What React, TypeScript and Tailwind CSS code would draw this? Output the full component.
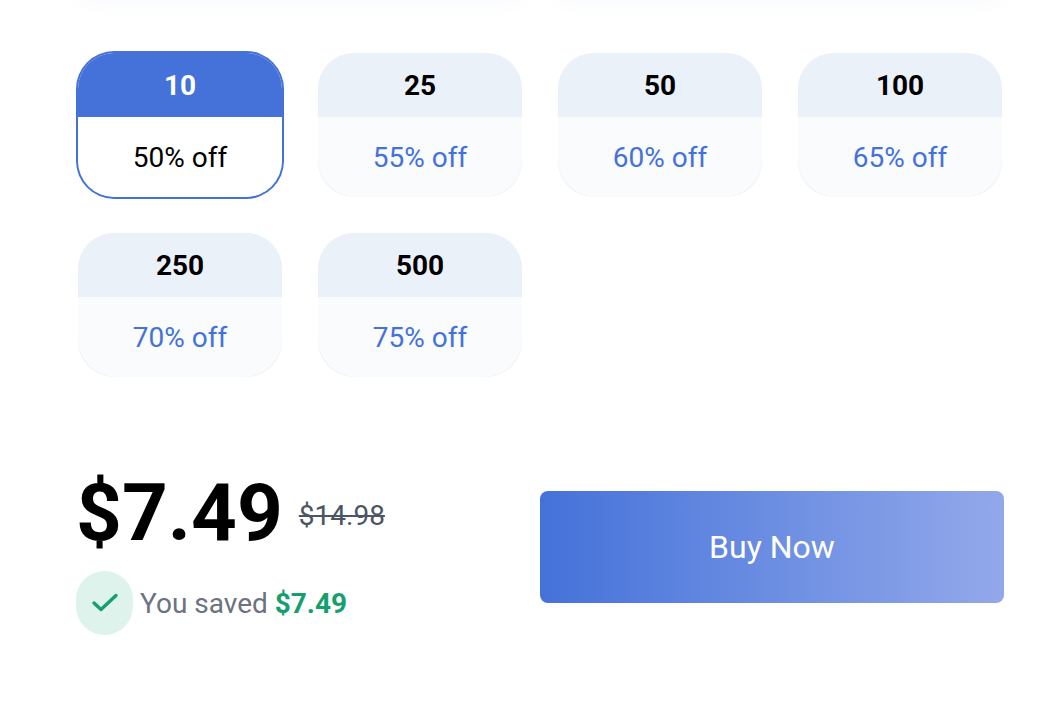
import React, { useState } from 'react';

interface Tier {
  quantity: number;
  discount: number;
}

interface TierCardProps {
  tier: Tier;
  selected: boolean;
  onSelect: (quantity: number) => void;
}

const tiers: Tier[] = [
  { quantity: 10, discount: 50 },
  { quantity: 25, discount: 55 },
  { quantity: 50, discount: 60 },
  { quantity: 100, discount: 65 },
  { quantity: 250, discount: 70 },
  { quantity: 500, discount: 75 },
];

const TierCard: React.FC<TierCardProps> = ({ tier, selected, onSelect }) => {
  return (
    <button
      type="button"
      aria-pressed={selected}
      onClick={() => onSelect(tier.quantity)}
      className={`flex flex-col overflow-hidden rounded-[36px] text-center text-[28px] leading-[33px] ${
        selected ? 'bg-white ring-2 ring-[#4472d9]' : 'bg-[#ebf1f8]'
      }`}
    >
      <span
        className={`w-full pt-4 pb-[15px] font-bold ${
          selected ? 'bg-[#4472d9] text-white' : 'bg-[#ebf1f8] text-black'
        }`}
      >
        {tier.quantity}
      </span>
      <span
        className={`w-full rounded-b-[38px] pt-6 pb-[23px] ${
          selected ? 'bg-white text-black' : 'bg-[#f9fbfd] text-[#4472d9]'
        }`}
      >
        {tier.discount}% off
      </span>
    </button>
  );
};

const App: React.FC = () => {
  const [selected, setSelected] = useState(10);

  return (
    <div className="min-h-screen overflow-hidden bg-white pr-[52px] pl-[76px] font-[Roboto,sans-serif]">
      {/* lower edge of the cards above */}
      <div className="-mt-12 grid grid-cols-2 gap-6">
        <div className="h-10 rounded-3xl shadow-[0_4px_24px_rgba(68,114,217,0.07)]" />
        <div className="h-10 rounded-3xl shadow-[0_4px_24px_rgba(68,114,217,0.07)]" />
      </div>

      <div className="mt-[59px] grid grid-cols-4 gap-9 p-0.5">
        {tiers.map((tier) => (
          <TierCard
            key={tier.quantity}
            tier={tier}
            selected={tier.quantity === selected}
            onSelect={setSelected}
          />
        ))}
      </div>

      <div className="mt-[88px] grid grid-cols-2 items-center">
        <div>
          <div className="flex items-start gap-4">
            <span className="text-[80px] leading-[92px] font-bold text-black">$7.49</span>
            <span className="text-[28px] leading-[98px] text-[#4b5563] line-through">$14.98</span>
          </div>
          <div className="mt-1.5 flex items-center gap-[7px] text-[28px] leading-[33px] text-[#6b7280]">
            <span className="flex h-16 w-[57px] items-center justify-center rounded-full bg-[#def3eb]">
              <svg width="28" height="20" viewBox="0 0 28 20" fill="none" aria-hidden="true">
                <path
                  d="M3 10L10 16.5L25 2.5"
                  stroke="#169f6e"
                  strokeWidth="3.4"
                  strokeLinecap="round"
                  strokeLinejoin="round"
                />
              </svg>
            </span>
            <span>
              You saved <span className="font-bold text-[#169f6e]">$7.49</span>
            </span>
          </div>
        </div>
        <button
          type="button"
          className="mb-2 rounded-lg bg-linear-to-r from-[#4472d9] to-[#93a8ea] py-9 text-[32px] leading-10 text-white"
        >
          Buy Now
        </button>
      </div>
    </div>
  );
};

export default App;
